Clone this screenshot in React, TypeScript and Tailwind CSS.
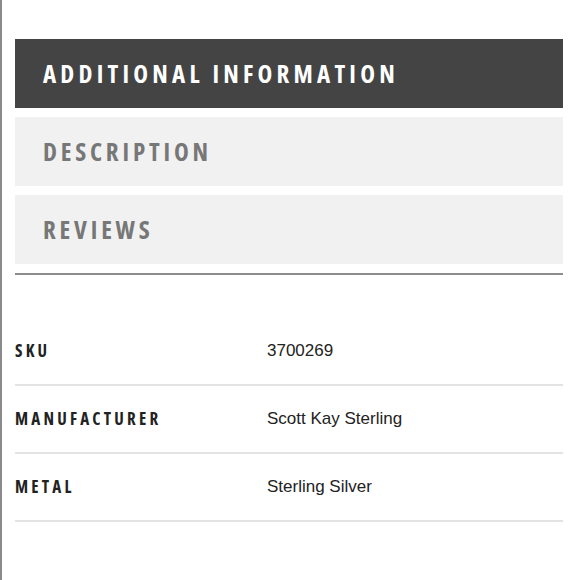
const tabs = [
  { label: "ADDITIONAL INFORMATION", active: true },
  { label: "DESCRIPTION", active: false },
  { label: "REVIEWS", active: false },
];

const rows = [
  { label: "SKU", value: "3700269" },
  { label: "MANUFACTURER", value: "Scott Kay Sterling" },
  { label: "METAL", value: "Sterling Silver" },
];

export default function App() {
  return (
    <div className="w-[580px] h-[580px] bg-white border-l-2 border-[#8a8a8a] overflow-hidden">
      <div className="pl-[13px] pr-[17px] pt-[39px]">
        <div className="flex flex-col gap-[9px]">
          {tabs.map((t) => (
            <div
              key={t.label}
              className={
                t.active
                  ? "h-[69px] bg-[#444444] flex items-center pl-[28px]"
                  : "h-[69px] bg-[#f1f1f1] flex items-center pl-[28px]"
              }
            >
              <span
                className={
                  t.active
                    ? "font-['Open_Sans'] font-bold [font-stretch:condensed] text-[25px] tracking-[4.2px] text-white"
                    : "font-['Open_Sans'] font-bold [font-stretch:condensed] text-[25px] tracking-[3.8px] text-[#777777]"
                }
              >
                {t.label}
              </span>
            </div>
          ))}
        </div>
        <div className="h-[2px] bg-[#8c8c8c] mt-[9px]" />

        <div className="mt-[43px]">
          {rows.map((r) => (
            <div key={r.label} className="h-[68px] flex items-center border-b-2 border-[#e3e3e3]">
              <span className="w-[252px] font-['Open_Sans'] font-bold [font-stretch:condensed] text-[17px] tracking-[3.2px] text-[#222222]">
                {r.label}
              </span>
              <span className="font-['Liberation_Sans'] text-[17px] text-[#222222]">{r.value}</span>
            </div>
          ))}
        </div>
      </div>
    </div>
  );
}
